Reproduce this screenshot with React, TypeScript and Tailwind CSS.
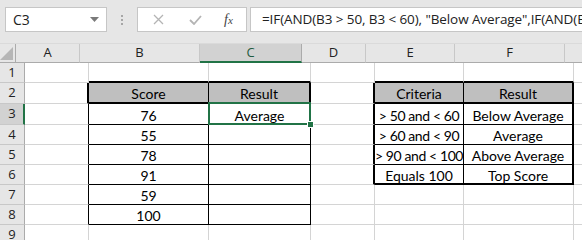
import React from 'react';

type Edge = 'grid' | 'thin' | 'thick';

/** Column widths in px, including each column's right grid line. */
const COLS = [
  { letter: 'A', w: 'w-[64px]' },
  { letter: 'B', w: 'w-[120px]' },
  { letter: 'C', w: 'w-[102px]' },
  { letter: 'D', w: 'w-[64px]' },
  { letter: 'E', w: 'w-[89px]' },
  { letter: 'F', w: 'w-[110px]' },
  { letter: '', w: 'w-[40px]' }
];

const ROW_HEIGHTS = ['h-[20px]', 'h-[21px]', 'h-[21px]', 'h-[20px]', 'h-[20px]', 'h-[20px]', 'h-[20px]', 'h-[20px]', 'h-[20px]'];

const CELLS: Record<string, string> = {
  '2-2': 'Score',
  '2-3': 'Result',
  '3-2': '76',
  '3-3': 'Average',
  '4-2': '55',
  '5-2': '78',
  '6-2': '91',
  '7-2': '59',
  '8-2': '100',
  '2-5': 'Criteria',
  '2-6': 'Result',
  '3-5': '> 50 and < 60',
  '3-6': 'Below Average',
  '4-5': '> 60 and < 90',
  '4-6': 'Average',
  '5-5': '> 90 and < 100',
  '5-6': 'Above Average',
  '6-5': 'Equals 100',
  '6-6': 'Top Score'
};

const RIGHT: Record<Edge, string> = {
  grid: 'border-r border-r-[#d4d4d4]',
  thin: 'border-r border-r-black',
  thick: 'border-r-2 border-r-black'
};

const BOTTOM: Record<Edge, string> = {
  grid: 'border-b border-b-[#d4d4d4]',
  thin: 'border-b border-b-black',
  thick: 'border-b-2 border-b-black'
};

/** Border on the right side of a cell (row r, column c: A = 1). */
function rightEdge(r: number, c: number): Edge {
  if (r >= 2 && r <= 8) {
    if (c === 1) return r === 2 ? 'thick' : 'thin';
    if (c === 2) return 'thin';
    if (c === 3) return r === 2 ? 'thick' : 'thin';
  }
  if (r >= 2 && r <= 6) {
    if (c === 4) return 'thick';
    if (c === 5) return 'thin';
    if (c === 6) return 'thick';
  }
  return 'grid';
}

/** Border on the bottom side of a cell. */
function bottomEdge(r: number, c: number): Edge {
  if (c === 2 || c === 3) {
    if (r === 1 || r === 2) return 'thick';
    if (r >= 3 && r <= 8) return 'thin';
  }
  if (c === 5 || c === 6) {
    if (r === 1 || r === 2 || r === 6) return 'thick';
    if (r >= 3 && r <= 5) return 'thin';
  }
  return 'grid';
}

const FormulaBar = () => (
  <div className="flex h-[43px] items-start pt-[7px] pl-[5px]">
    <div className="flex h-[25px] w-[102px] items-center justify-between border border-[#c6c6c6] bg-white pl-[7px] pr-[7px] text-[14px] text-[#222]">
      <span>C3</span>
      <svg width="9" height="5" viewBox="0 0 9 5">
        <path d="M0 0 L9 0 L4.5 5 Z" fill="#7a7a7a" />
      </svg>
    </div>
    <div className="flex h-[25px] w-[30px] flex-col items-center justify-center gap-[2px]">
      <span className="h-[2px] w-[2px] bg-[#a6a6a6]" />
      <span className="h-[2px] w-[2px] bg-[#a6a6a6]" />
      <span className="h-[2px] w-[2px] bg-[#a6a6a6]" />
    </div>
    <div className="flex h-[25px] w-[110px] items-center border border-[#c6c6c6] bg-white">
      <svg className="ml-[15px]" width="11" height="11" viewBox="0 0 11 11">
        <path d="M1 1 L10 10 M10 1 L1 10" stroke="#b4b4b4" strokeWidth="1.3" />
      </svg>
      <svg className="ml-[25px]" width="13" height="10" viewBox="0 0 13 10">
        <path d="M1 5 L5 9 L12 1" stroke="#b4b4b4" strokeWidth="1.8" fill="none" />
      </svg>
      <span className="ml-[22px] font-['Liberation_Serif',serif] text-[14px] italic text-[#444]">
        f<span className="text-[11px]">x</span>
      </span>
    </div>
    <div className="ml-[3px] flex h-[25px] flex-1 items-center overflow-hidden whitespace-nowrap border border-r-0 border-[#c6c6c6] bg-white pl-[11px] text-[13.5px] tracking-[-0.1px] text-[#222]">
      =IF(AND(B3 &gt; 50, B3 &lt; 60), "Below Average",IF(AND(B3 &gt; 60, B3 &lt; 90), "Average"
    </div>
  </div>
);

const HeaderRow = () => (
  <div className="flex h-[20px] border-t border-t-[#dadada]">
    <div className="flex w-[25px] items-end justify-end border-r border-b border-[#ababab] bg-[#e6e6e6] pr-[2px] pb-[2px]">
      <svg width="13" height="13" viewBox="0 0 13 13">
        <path d="M13 0 L13 13 L0 13 Z" fill="#b6b6b6" />
      </svg>
    </div>
    {COLS.map(({ letter, w }, j) =>
      letter === 'C' ? (
        <div
          key={j}
          className={`${w} flex shrink-0 items-center justify-center border-r border-r-[#ababab] border-b-2 border-b-[#217346] bg-[#d2d2d2] pt-[1px] text-[13px] text-[#1f5b40]`}
        >
          {letter}
        </div>
      ) : (
        <div
          key={j}
          className={`${w} flex shrink-0 items-center justify-center border-r border-b border-r-[#c8c8c8] border-b-[#ababab] bg-[#e6e6e6] text-[13px] text-[#222]`}
        >
          {letter}
        </div>
      )
    )}
  </div>
);

export default function App() {
  const rows = [1, 2, 3, 4, 5, 6, 7, 8, 9];
  return (
    <div className="h-[240px] w-[582px] overflow-hidden bg-[#e6e6e6] font-['Open_Sans',sans-serif]">
      <FormulaBar />
      <HeaderRow />
      {rows.map((r, i) => (
        <div key={r} className={`flex ${ROW_HEIGHTS[i]}`}>
          <div
            className={`flex w-[25px] shrink-0 items-center justify-center border-b border-b-[#c8c8c8] text-[13px] ${
              r === 3
                ? 'border-r-2 border-r-[#217346] bg-[#d2d2d2] pl-[1px] text-[#222]'
                : 'border-r border-r-[#ababab] bg-[#e6e6e6] text-[#222]'
            }`}
          >
            {r}
          </div>
          {COLS.map(({ w }, j) => {
            const c = j + 1;
            const text = CELLS[`${r}-${c}`];
            const header = r === 2 && (c === 2 || c === 3 || c === 5 || c === 6);
            const tight = c === 5 && r >= 3 && r <= 5;
            return (
              <div
                key={j}
                className={`relative flex shrink-0 items-center justify-center whitespace-nowrap pt-[2px] font-['Lato',sans-serif] text-[14px] text-black ${
                  tight ? 'tracking-[-0.4px]' : ''
                } ${w} ${RIGHT[rightEdge(r, c)]} ${BOTTOM[bottomEdge(r, c)]} ${header ? 'bg-[#bfbfbf]' : 'bg-white'}`}
              >
                {text}
                {r === 3 && c === 3 && (
                  <>
                    <span className="absolute -top-[2px] -left-[1px] -right-[1px] -bottom-[1px] z-10 border-2 border-[#217346]" />
                    <span className="absolute -right-[4px] -bottom-[4px] z-20 h-[7px] w-[7px] border border-white bg-[#217346]" />
                  </>
                )}
              </div>
            );
          })}
        </div>
      ))}
    </div>
  );
}
